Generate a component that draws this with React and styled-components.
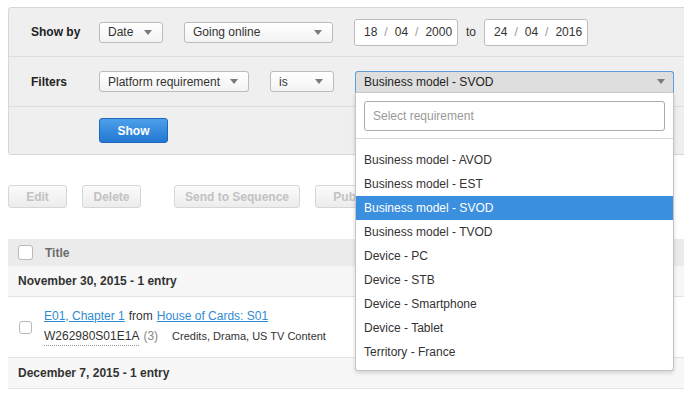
import React from 'react';
import styled, { createGlobalStyle } from 'styled-components';

const GlobalStyle = createGlobalStyle`
  body {
    margin: 0;
    background: #fff;
    font-family: "Liberation Sans", Arial, sans-serif;
    font-size: 12px;
    color: #333;
  }
`;

const requirements = [
  'Business model - AVOD',
  'Business model - EST',
  'Business model - SVOD',
  'Business model - TVOD',
  'Device - PC',
  'Device - STB',
  'Device - Smartphone',
  'Device - Tablet',
  'Territory - France',
];

const Arrow = () => (
  <svg width="8" height="5" viewBox="0 0 8 5">
    <path d="M0 0 L8 0 L4 5 Z" fill="#7a7a7a" />
  </svg>
);

const Select = ({ width, children }) => (
  <SelectBox width={width}>
    <span>{children}</span>
    <Arrow />
  </SelectBox>
);

const DateInput = ({ day, month, year }) => (
  <DateBox>
    <span>{day}</span>
    <Slash>/</Slash>
    <span>{month}</span>
    <Slash>/</Slash>
    <span>{year}</span>
  </DateBox>
);

const App = () => (
  <Page>
    <GlobalStyle />
    <Panel>
      <FilterRow>
        <Label>Show by</Label>
        <Controls>
          <Select width={64}>Date</Select>
          <Select width={149}>Going online</Select>
          <DateInput day="18" month="04" year="2000" />
          <To>to</To>
          <DateInput day="24" month="04" year="2016" />
        </Controls>
      </FilterRow>
      <FilterRow>
        <Label>Filters</Label>
        <Controls>
          <Select width={150}>Platform requirement</Select>
          <Select width={64}>is</Select>
          <OpenSelect>
            <OpenHead>
              <span>Business model - SVOD</span>
              <Arrow />
            </OpenHead>
            <Dropdown>
              <SearchWrap>
                <Search placeholder="Select requirement" autoFocus={false} />
              </SearchWrap>
              <Options>
                {requirements.map(r => (
                  <Option key={r} active={r === 'Business model - SVOD'}>{r}</Option>
                ))}
              </Options>
            </Dropdown>
          </OpenSelect>
        </Controls>
      </FilterRow>
      <FilterRow last>
        <Label />
        <ShowButton>Show</ShowButton>
      </FilterRow>
    </Panel>

    <Actions>
      <ActionButton width={59}>Edit</ActionButton>
      <ActionButton width={59}>Delete</ActionButton>
      <ActionButton width={126} spaced>Send to Sequence</ActionButton>
      <ActionButton width={80}>Publish</ActionButton>
    </Actions>

    <Table>
      <HeaderRow>
        <Checkbox />
        <HeadCell>Title</HeadCell>
      </HeaderRow>
      <GroupRow>November 30, 2015 - 1 entry</GroupRow>
      <EntryRow>
        <Checkbox />
        <EntryText>
          <Line>
            <Link>E01, Chapter 1</Link>
            <span>from</span>
            <Link>House of Cards: S01</Link>
          </Line>
          <Line>
            <Code>W262980S01E1A</Code>
            <Count>(3)</Count>
            <Tags>Credits, Drama, US TV Content</Tags>
          </Line>
        </EntryText>
      </EntryRow>
      <GroupRow>December 7, 2015 - 1 entry</GroupRow>
    </Table>
  </Page>
);

const Page = styled.div`
  width: 684px;
  height: 399px;
  overflow: hidden;
  padding: 7px 0 0 8px;
  box-sizing: border-box;
`;

const Panel = styled.div`
  width: 720px;
  background: #efefef;
  border: 1px solid #d7d7d7;
  border-radius: 3px;
`;

const FilterRow = styled.div`
  display: flex;
  align-items: center;
  height: 49px;
  padding-left: 22px;
  border-bottom: ${p => (p.last ? 'none' : '1px solid #dddddd')};
  box-sizing: border-box;
  &:nth-child(2) { height: 50px; }
  &:last-child { height: 47px; }
`;

const Label = styled.div`
  width: 68px;
  font-weight: bold;
  font-size: 12px;
  color: #222;
`;

const Controls = styled.div`
  display: flex;
  align-items: center;
  gap: 21px;
`;

const SelectBox = styled.div`
  width: ${p => p.width}px;
  height: 21px;
  box-sizing: border-box;
  display: flex;
  align-items: center;
  justify-content: space-between;
  padding: 0 10px 0 8px;
  background: linear-gradient(#ffffff, #f3f3f3);
  border: 1px solid #bcbcbc;
  border-radius: 3px;
  color: #333;
`;

const DateBox = styled.div`
  width: 104px;
  height: 27px;
  box-sizing: border-box;
  display: flex;
  align-items: center;
  gap: 7px;
  padding-left: 9px;
  background: #fff;
  border: 1px solid #bdbdbd;
  border-radius: 3px;
  color: #333;
`;

const Slash = styled.span`
  color: #999;
`;

const To = styled.span`
  margin: 0 -13px;
  color: #333;
`;

const OpenSelect = styled.div`
  position: relative;
  width: 319px;
`;

const OpenHead = styled.div`
  height: 22px;
  box-sizing: border-box;
  display: flex;
  align-items: center;
  justify-content: space-between;
  padding: 0 8px 0 8px;
  background: #dedede;
  border: 1px solid #5f9ddb;
  border-bottom-color: #cfcfcf;
  border-radius: 3px 3px 0 0;
  color: #222;
`;

const Dropdown = styled.div`
  position: absolute;
  top: 100%;
  left: 0;
  right: 0;
  z-index: 10;
  background: #fff;
  border: 1px solid #c4c4c4;
  border-top: none;
  border-radius: 0 0 3px 3px;
  box-shadow: 0 2px 4px rgba(0, 0, 0, 0.15);
`;

const SearchWrap = styled.div`
  padding: 8px 8px 7px 8px;
  border-bottom: 1px solid #dadada;
`;

const Search = styled.input`
  width: 100%;
  height: 30px;
  box-sizing: border-box;
  border: 1px solid #aaaaaa;
  border-radius: 3px;
  padding: 0 8px;
  font-family: "Liberation Sans", Arial, sans-serif;
  font-size: 12px;
  color: #333;
  outline: none;
  &::placeholder { color: #999; }
`;

const Options = styled.div`
  padding: 9px 0 6px;
`;

const Option = styled.div`
  height: 24px;
  line-height: 24px;
  padding-left: 8px;
  font-size: 12px;
  color: ${p => (p.active ? '#fff' : '#333')};
  background: ${p => (p.active ? '#3b8fdf' : 'transparent')};
`;

const ShowButton = styled.button`
  width: 69px;
  height: 25px;
  border: 1px solid #1d68bd;
  border-radius: 3px;
  background: linear-gradient(#4da0ea, #2277d3);
  color: #fff;
  font-family: "Liberation Sans", Arial, sans-serif;
  font-weight: bold;
  font-size: 12px;
`;

const Actions = styled.div`
  display: flex;
  gap: 15px;
  margin-top: 30px;
`;

const ActionButton = styled.button`
  width: ${p => p.width}px;
  height: 23px;
  margin-left: ${p => (p.spaced ? '18px' : '0')};
  border: 1px solid #d6d6d6;
  border-radius: 3px;
  background: linear-gradient(#fbfbfb, #ececec);
  color: #c2c2c2;
  font-family: "Liberation Sans", Arial, sans-serif;
  font-weight: bold;
  font-size: 12px;
  text-align: center;
  padding: 0;
`;

const Table = styled.div`
  width: 720px;
  margin-top: 31px;
`;

const HeaderRow = styled.div`
  display: flex;
  align-items: center;
  gap: 12px;
  height: 27px;
  padding-left: 10px;
  background: #ebebeb;
`;

const HeadCell = styled.div`
  font-weight: bold;
  color: #6b6b6b;
`;

const Checkbox = styled.div`
  width: 13px;
  height: 13px;
  border: 1px solid #b9b9b9;
  border-radius: 3px;
  background: #fff;
`;

const GroupRow = styled.div`
  height: 30px;
  display: flex;
  align-items: center;
  padding-left: 10px;
  background: #f7f7f7;
  border-bottom: 1px solid #e3e3e3;
  font-weight: bold;
  color: #333;
`;

const EntryRow = styled.div`
  height: 60px;
  display: flex;
  align-items: center;
  gap: 12px;
  padding-left: 11px;
  border-bottom: 1px solid #e3e3e3;
  & > ${Checkbox} { width: 11px; height: 11px; }
`;

const EntryText = styled.div`
  display: flex;
  flex-direction: column;
  gap: 6px;
`;

const Line = styled.div`
  display: flex;
  align-items: baseline;
  gap: 4px;
`;

const Link = styled.span`
  color: #2f8bd3;
  text-decoration: underline;
`;

const Code = styled.span`
  color: #333;
  border-bottom: 1px dotted #999;
  padding-bottom: 2px;
`;

const Count = styled.span`
  color: #888;
`;

const Tags = styled.span`
  margin-left: 10px;
  font-size: 11px;
  color: #333;
`;

export default App;
